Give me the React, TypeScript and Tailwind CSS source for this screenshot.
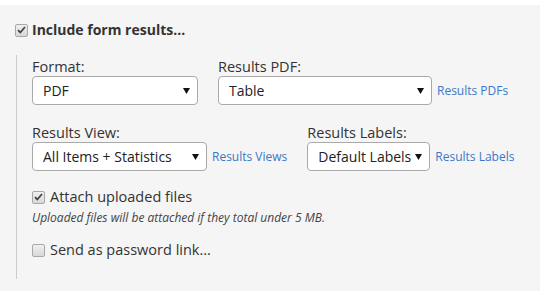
import type { ReactNode } from "react";

const font = { fontFamily: '"Open Sans", "Liberation Sans", sans-serif' };

export default function App() {
  return (
    <div className="h-[291px] w-[540px] bg-white pt-[5px] text-[#333]" style={font}>
      <div className="h-[286px] bg-[#f5f5f5] pl-[15px] pt-[15px]">
        <div className="flex h-5 items-center gap-[4px]">
          <Checkbox checked />
          <span className="text-[14px] font-bold leading-5">Include form results...</span>
        </div>

        <div className="ml-px mt-[15px] h-[224px] border-l border-[#ccc] pl-[15px] pt-[2px]">
          <div className="flex gap-5">
            <Field label="Format:">
              <FakeSelect value="PDF" width="w-[166px]" />
            </Field>
            <Field label="Results PDF:">
              <FakeSelect value="Table" width="w-[214px]" />
              <HelpLink>Results PDFs</HelpLink>
            </Field>
          </div>

          <div className="mt-[18px] flex gap-5">
            <Field label="Results View:">
              <FakeSelect value="All Items + Statistics" width="w-[175px]" />
              <HelpLink>Results Views</HelpLink>
            </Field>
            <Field label="Results Labels:">
              <FakeSelect value="Default Labels" width="w-[123px]" />
              <HelpLink>Results Labels</HelpLink>
            </Field>
          </div>

          <div className="mt-[16px] flex h-5 items-center gap-[5px]">
            <Checkbox checked />
            <span className="text-[14.5px] leading-5">Attach uploaded files</span>
          </div>
          <p className="mt-[3px] text-[12px] italic leading-4 text-[#444]">
            Uploaded files will be attached if they total under 5 MB.
          </p>

          <div className="mt-[14px] flex h-5 items-center gap-[5px]">
            <Checkbox />
            <span className="text-[14.5px] leading-5">Send as password link...</span>
          </div>
        </div>
      </div>
    </div>
  );
}

function Field({ label, children }: { label: string; children: ReactNode }) {
  return (
    <div>
      <div className="h-[19px] text-[14.5px] leading-[19px]">{label}</div>
      <div className="flex items-center gap-[5px]">{children}</div>
    </div>
  );
}

function FakeSelect({ value, width }: { value: string; width: string }) {
  return (
    <div
      className={`flex h-[29px] ${width} items-center justify-between rounded-[4px] border border-[#aaa] bg-white pl-[10px] pr-[7px] text-[14px] text-[#222]`}
    >
      <span className="truncate">{value}</span>
      <svg width="7" height="6" viewBox="0 0 7 6" className="shrink-0">
        <path d="M0 0h7L3.5 6z" fill="#111" />
      </svg>
    </div>
  );
}

function HelpLink({ children }: { children: ReactNode }) {
  return <span className="whitespace-nowrap text-[12px] text-[#3b78c6]">{children}</span>;
}

function Checkbox({ checked = false }: { checked?: boolean }) {
  return (
    <span className="flex h-[13px] w-[13px] shrink-0 items-center justify-center rounded-[2px] border border-[#a8a8a8] bg-gradient-to-b from-[#f0f0f0] to-[#d8d8d8]">
      {checked ? (
        <svg width="9" height="8" viewBox="0 0 9 8">
          <path d="M1 4.2l2.3 2.3L8 1" fill="none" stroke="#444" strokeWidth="1.8" />
        </svg>
      ) : null}
    </span>
  );
}
